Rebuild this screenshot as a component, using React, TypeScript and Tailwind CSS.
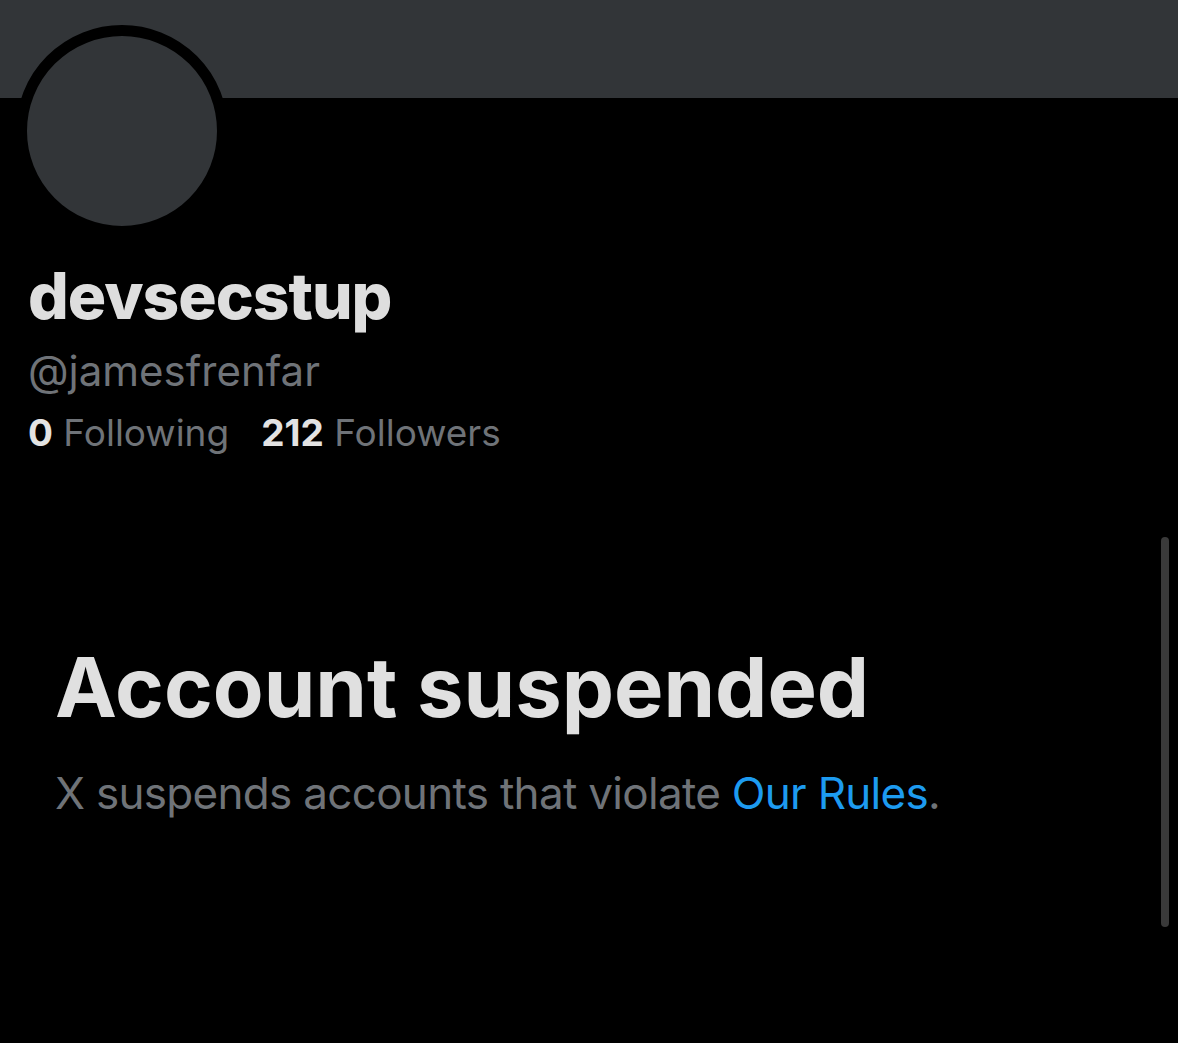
export default function App() {
  return (
    <div className="relative h-[1043px] w-[1178px] overflow-hidden bg-black font-['Inter',sans-serif]">
      {/* banner */}
      <div className="h-[98px] w-full bg-[#323538]" />

      {/* profile header */}
      <div className="px-[28px]">
        <div className="-ml-[12px] -mt-[73px] h-[212px] w-[212px] rounded-full border-[11px] border-black bg-[#323538]" />
        <h1 className="mt-[21px] text-[64px] font-extrabold leading-[76px] tracking-[-1px] text-[#dedede]">devsecstup</h1>
        <p className="mt-[10px] text-[42px] leading-[54px] text-[#6f7378]">@jamesfrenfar</p>
        <div className="mt-[11px] flex gap-[32px] text-[37px] leading-[48px] text-[#6f7378]">
          <span>
            <b className="font-bold text-[#e3e3e3]">0</b> Following
          </span>
          <span>
            <b className="font-bold text-[#e3e3e3]">212</b> Followers
          </span>
        </div>
      </div>

      {/* suspended notice */}
      <div className="mt-[182px] px-[55px]">
        <h2 className="text-[83px] font-bold leading-[96px] text-[#e0e0e0]">Account suspended</h2>
        <p className="mt-[30px] text-[44px] leading-[56px] tracking-[-0.7px] text-[#6f7378]">
          X suspends accounts that violate <span className="text-[#1d9bf0]">Our Rules</span>.
        </p>
      </div>

      {/* scrollbar */}
      <div className="absolute left-[1161px] top-[537px] h-[390px] w-[8px] rounded-full bg-[#3a3a3a]" />
    </div>
  )
}
